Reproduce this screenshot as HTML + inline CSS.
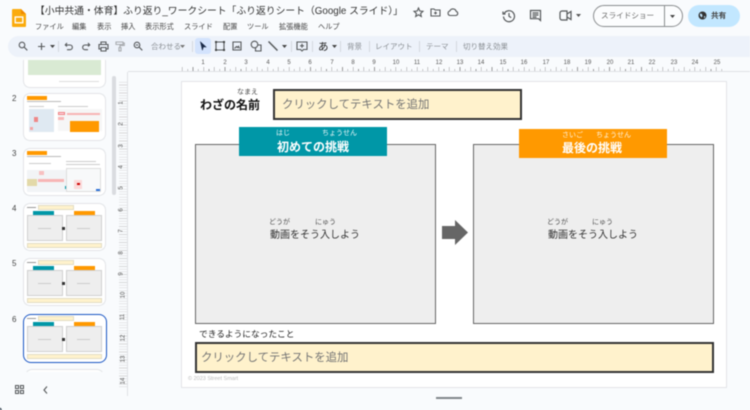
<!DOCTYPE html>
<html lang="ja"><head><meta charset="utf-8"><title>Slides</title>
<style>
html,body{margin:0;padding:0;width:750px;height:410px;overflow:hidden;background:#f9fbfd}
#r{position:relative;width:750px;height:410px;overflow:hidden;background:#f9fbfd;filter:blur(.4px);font-family:"Liberation Sans","Noto Sans CJK JP",sans-serif;color:#222}
#r div,#r span,#r svg{position:absolute}
.t{white-space:nowrap;line-height:1}
.m{top:23px;font-size:7.2px;color:#444;white-space:nowrap;line-height:1.2}
.tb{top:42px;font-size:7.5px;color:#8a8f94;white-space:nowrap;line-height:1.3}
.sep{top:41px;width:1px;height:11px;background:#d3d8df}
svg.i{fill:none;stroke:#55585a;stroke-width:1.1}
.hn{top:60px;font-size:6px;color:#555;line-height:1;font-family:"Liberation Sans",sans-serif;transform:translateX(-50%)}
.vn{left:120px;font-size:6px;color:#555;line-height:1;transform:translateY(-50%) rotate(-90deg);font-family:"Liberation Sans",sans-serif}
.num{left:12px;font-size:8px;color:#444;line-height:1}
.th{left:23px;width:81px;height:46px;background:#fff;border:1px solid #e3e5e8;border-radius:7px;overflow:hidden}
.th div{position:absolute}
.gb{background:#eee;border:.5px solid #d0d0d0;box-sizing:border-box;top:11px;height:26px;width:36px}
.by{background:#fff2cc;border:.5px solid #e2dcc4;box-sizing:border-box}
.ln{background:#ccc;height:1px}
.b{background:#eee;border:1.5px solid #666;box-sizing:border-box;top:144px;height:180px;width:241px}
.ph{background:#fff2cc;border:2px solid #333;box-sizing:border-box}
.pt{font-size:11.4px;color:#757575;line-height:1;white-space:nowrap}
.ru{font-size:7px;line-height:1;white-space:nowrap}
</style></head><body><div id="r">

<!-- logo -->
<svg style="left:11px;top:8px" width="16" height="20" viewBox="0 0 16 20"><path d="M2 1h8l5 5v12a1 1 0 0 1-1 1H2a1 1 0 0 1-1-1V2a1 1 0 0 1 1-1z" fill="#fbab0c"/><path d="M10 1l5 5h-5z" fill="#f08a00"/><rect x="4.2" y="9" width="7.6" height="5.8" fill="none" stroke="#fff" stroke-width="1.3"/></svg>
<div class="t" style="left:35px;top:6px;font-size:9.8px;color:#333;line-height:12px">【小中共通・体育】ふり返り_ワークシート「ふり返りシート（Google スライド）」</div>
<span class="m" style="left:35px">ファイル</span><span class="m" style="left:72px">編集</span><span class="m" style="left:97px">表示</span><span class="m" style="left:121px">挿入</span><span class="m" style="left:145px">表示形式</span><span class="m" style="left:184px">スライド</span><span class="m" style="left:223px">配置</span><span class="m" style="left:247px">ツール</span><span class="m" style="left:279px">拡張機能</span><span class="m" style="left:318px">ヘルプ</span>

<!-- title icons -->
<svg class="i" style="left:413px;top:7px" width="11" height="11" viewBox="0 0 11 11"><path d="M5.5 1l1.3 3 3.2.3-2.4 2.1.7 3.1-2.8-1.7-2.8 1.7.7-3.1L1 4.3l3.2-.3z"/></svg>
<svg class="i" style="left:430px;top:7px" width="11" height="10" viewBox="0 0 11 10"><path d="M1 2h3l1 1h5v6H1zM5.5 4.500v3M4 6h3"/></svg>
<svg class="i" style="left:447px;top:7px" width="12" height="10" viewBox="0 0 12 10"><path d="M3 8.500a2.300 2.300 0 0 1-.2-4.500 3.400 3.400 0 0 1 6.400.4 2.100 2.100 0 0 1-.3 4.100z"/></svg>

<!-- right header -->
<svg class="i" style="left:502px;top:9px;stroke-width:1.2" width="14" height="14" viewBox="0 0 14 14"><path d="M2.200 4.500a5.500 5.500 0 1 1-.7 3M1 2.500v2.500h2.500M7 4v3.300l2.200 1.300"/></svg>
<svg class="i" style="left:529px;top:9px;stroke-width:1.2" width="13" height="13" viewBox="0 0 13 13"><path d="M1.500 1.500h10v10l-2-1.800h-8zM3.500 4h6M3.500 6h6M3.500 8h4"/></svg>
<svg class="i" style="left:559px;top:10px;stroke-width:1.2" width="13" height="11" viewBox="0 0 13 11"><path d="M1 3a2 2 0 0 1 2-2h5v9H3a2 2 0 0 1-2-2zM8 4l4-2.500v8L8 7"/></svg>
<svg style="left:576px;top:14px" width="6" height="4"><path d="M0 0h5L2.500 3z" fill="#555"/></svg>
<div style="left:593px;top:5px;width:90px;height:22px;border:1px solid #8a8d8f;border-radius:12px;box-sizing:border-box;background:#fcfdfe"></div>
<div style="left:664px;top:5px;width:1px;height:22px;background:#8a8d8f"></div>
<span class="t" style="left:601px;top:12px;font-size:7.600px;color:#666">スライドショー</span>
<svg style="left:670px;top:15px" width="6" height="4"><path d="M0 0h5L2.500 3z" fill="#444"/></svg>
<div style="left:688px;top:5px;width:52px;height:22px;border-radius:11px;background:#c2e7ff"></div>
<svg style="left:698px;top:11px" width="9" height="9" viewBox="0 0 9 9"><circle cx="4.500" cy="4.500" r="4" fill="#333"/><path d="M2 2.500l2 .5 .5 2-1 1.500-1.500-2zM6 5l1.500.5-1.500 2z" fill="#c2e7ff"/></svg>
<span class="t" style="left:711px;top:12px;font-size:7.600px;color:#444;font-weight:bold">共有</span>

<!-- toolbar -->
<div style="left:8px;top:36px;width:760px;height:21px;border-radius:11px;background:#edf2fa"></div>
<svg class="i" style="left:18px;top:41px" width="10" height="10" viewBox="0 0 10 10"><circle cx="4" cy="4" r="2.800"/><path d="M6 6l3.300 3.300"/></svg>
<svg class="i" style="left:37px;top:42px" width="9" height="9" viewBox="0 0 9 9"><path d="M4.500 1v7M1 4.500h7"/></svg>
<svg style="left:50px;top:45px" width="6" height="4"><path d="M0 0h5L2.500 3z" fill="#444"/></svg>
<div class="sep" style="left:58px"></div>
<svg class="i" style="left:64px;top:42px" width="10" height="9" viewBox="0 0 10 9"><path d="M3 1L1.300 3 3 4.500M1.500 3H6a2.300 2.300 0 0 1 0 4.700H3"/></svg>
<svg class="i" style="left:81px;top:42px" width="10" height="9" viewBox="0 0 10 9"><path d="M7 1l1.700 2L7 4.500M8.500 3H4a2.300 2.300 0 0 0 0 4.700h3"/></svg>
<svg class="i" style="left:98px;top:41px" width="11" height="11" viewBox="0 0 11 11"><path d="M3 3.500V1h5v2.500M2.500 8H1V3.500h9V8H8.500M3 6.500h5V10H3z"/></svg>
<svg class="i" style="left:115px;top:41px;stroke:#a8abaf" width="10" height="11" viewBox="0 0 10 11"><path d="M1 1h7v2.500H1zM8 2h1.300v2.500H5v2M4 6.500h2V10H4z"/></svg>
<svg class="i" style="left:133px;top:41px" width="10" height="10" viewBox="0 0 10 10"><circle cx="4" cy="4" r="2.800"/><path d="M6 6l3.300 3.300M2.800 4h2.400"/></svg>
<span class="tb" style="left:151px">合わせる</span>
<svg style="left:180px;top:45px" width="6" height="4"><path d="M0 0h5L2.500 3z" fill="#777"/></svg>
<div class="sep" style="left:192px"></div>
<div style="left:195px;top:38px;width:16px;height:16px;border-radius:3px;background:#d3e3fd"></div>
<svg style="left:199px;top:41px" width="9" height="11" viewBox="0 0 9 11"><path d="M1.500 1l5.500 5H4.300l-.9 3.200z" fill="#1a2a48" stroke="#1a2a48" stroke-width=".6"/></svg>
<svg class="i" style="left:214px;top:40px" width="12" height="12" viewBox="0 0 12 12"><path d="M2 2h8v8H2z"/><path d="M1 1h2v2H1zM9 1h2v2H9zM1 9h2v2H1zM9 9h2v2H9z" fill="#444746" stroke="none"/></svg>
<svg class="i" style="left:232px;top:41px" width="10" height="10" viewBox="0 0 10 10"><path d="M1 1h8v8H1zM2.500 7.500l2-2 1 1 1-1.200 1 2.200"/></svg>
<svg class="i" style="left:250px;top:40px" width="12" height="12" viewBox="0 0 12 12"><circle cx="4.500" cy="4.500" r="3.300"/><path d="M7.500 5H11v6H5.500V8"/></svg>
<svg class="i" style="left:268px;top:41px;stroke-width:1.500" width="10" height="10" viewBox="0 0 10 10"><path d="M.5.500L9.500 9.500"/></svg>
<svg style="left:282px;top:45px" width="6" height="4"><path d="M0 0h5L2.500 3z" fill="#444"/></svg>
<div class="sep" style="left:291px"></div>
<svg class="i" style="left:296px;top:41px" width="12" height="11" viewBox="0 0 12 11"><path d="M1 1h10v7.500H7.500L6 10 4.500 8.500H1zM6 2.800v4M4 4.800h4"/></svg>
<div class="sep" style="left:312px"></div>
<span class="t" style="left:318px;top:42px;font-size:10.500px;color:#222">あ</span>
<svg style="left:332px;top:45px" width="6" height="4"><path d="M0 0h5L2.500 3z" fill="#444"/></svg>
<div class="sep" style="left:340px"></div>
<span class="tb" style="left:347px">背景</span><div class="sep" style="left:369px"></div>
<span class="tb" style="left:375px">レイアウト</span><div class="sep" style="left:419px"></div>
<span class="tb" style="left:426px">テーマ</span><div class="sep" style="left:456px"></div>
<span class="tb" style="left:463px">切り替え効果</span>

<!-- thumbnails -->
<div style="left:0;top:60px;width:112px;height:312px;overflow:hidden">
  <div class="th" style="top:-20px;left:23px"><div style="left:4px;top:4px;width:73px;height:30px;background:#d9ead3"></div><div class="ln" style="left:35px;top:40px;width:40px;background:#ddd"></div></div>
  <div class="th" style="top:33px;left:23px">
    <div style="left:3px;top:2px;width:20px;height:4px;background:#ff9900"></div><div class="ln" style="left:3px;top:7px;width:34px;background:#bbb"></div>
    <div class="ln" style="left:5px;top:12px;width:15px;background:#ccc"></div><div class="ln" style="left:34px;top:12px;width:30px;background:#ccc"></div>
    <div style="left:5px;top:15px;width:25px;height:23px;background:#dfe9f2"></div>
    <div style="left:10px;top:23px;width:4px;height:5px;background:#e88"></div><div style="left:6px;top:33px;width:3px;height:3px;background:#f3a6a6"></div>
    <div style="left:34px;top:15px;width:44px;height:22px;background:#f6f6f6"></div>
    <div style="left:34px;top:18px;width:7px;height:3px;border:.5px solid #f08080;box-sizing:border-box;background:#fde"></div>
    <div style="left:43px;top:19px;width:33px;height:2px;background:#f7b5b5"></div>
    <div style="left:34px;top:23px;width:6px;height:3px;background:#f8b8b8"></div>
    <div style="left:46px;top:27px;width:29px;height:11px;background:#ff9900"></div>
  </div>
  <div class="th" style="top:88px;left:23px">
    <div style="left:3px;top:2px;width:20px;height:4px;background:#ff9900"></div><div class="ln" style="left:3px;top:7px;width:34px;background:#bbb"></div>
    <div class="ln" style="left:5px;top:14px;width:22px;background:#ccc"></div><div class="ln" style="left:42px;top:12px;width:30px;background:#ccc"></div><div class="ln" style="left:42px;top:15px;width:34px;background:#ccc"></div>
    <div style="left:3px;top:21px;width:40px;height:22px;background:#f2f4f6"></div>
    <div style="left:3px;top:30px;width:10px;height:7px;background:#e3d9a8"></div>
    <div style="left:14px;top:30px;width:26px;height:3px;background:#f7b5b5"></div>
    <div style="left:15px;top:22px;width:5px;height:4px;background:#f8c0c0"></div>
    <div style="left:41px;top:37px;width:3px;height:3px;background:#0097a7"></div>
    <div style="left:42px;top:19px;width:35px;height:24px;background:#f8f9fa;border:.5px solid #ddd;box-sizing:border-box"></div>
    <div style="left:50px;top:31px;width:8px;height:9px;background:#fbdada"></div><div style="left:53px;top:34px;width:3px;height:2px;background:#c00"></div>
    <div style="left:72px;top:40px;width:4px;height:2px;background:#2a6fd6"></div>
  </div>
  <div class="th" style="top:143px;left:23px"><div class="ln" style="left:3px;top:3px;width:9px;background:#999"></div><div class="by" style="left:14px;top:1px;width:36px;height:5px"></div><div style="left:9px;top:7px;width:21px;height:4px;background:#0097a7"></div><div style="left:50px;top:7px;width:21px;height:4px;background:#ff9900"></div><div class="gb" style="left:3px"></div><div class="gb" style="left:42px"></div><div class="ln" style="left:14px;top:24px;width:13px"></div><div class="ln" style="left:53px;top:24px;width:13px"></div><div style="left:38px;top:23px;width:3px;height:3px;background:#333"></div><div class="by" style="left:3px;top:39px;width:75px;height:5px"></div></div>
  <div class="th" style="top:198px;left:23px"><div class="ln" style="left:3px;top:3px;width:9px;background:#999"></div><div class="by" style="left:14px;top:1px;width:36px;height:5px"></div><div style="left:9px;top:7px;width:21px;height:4px;background:#0097a7"></div><div style="left:50px;top:7px;width:21px;height:4px;background:#ff9900"></div><div class="gb" style="left:3px"></div><div class="gb" style="left:42px"></div><div class="ln" style="left:14px;top:24px;width:13px"></div><div class="ln" style="left:53px;top:24px;width:13px"></div><div style="left:38px;top:23px;width:3px;height:3px;background:#333"></div><div class="by" style="left:3px;top:39px;width:75px;height:5px"></div></div>
  <div class="th" style="top:254px;left:23px;border:1.500px solid #1a56c4;border-radius:8px;width:82px;height:47px"><div class="ln" style="left:3px;top:3px;width:9px;background:#999"></div><div class="by" style="left:14px;top:1px;width:36px;height:5px"></div><div style="left:9px;top:7px;width:21px;height:4px;background:#0097a7"></div><div style="left:50px;top:7px;width:21px;height:4px;background:#ff9900"></div><div class="gb" style="left:3px"></div><div class="gb" style="left:42px"></div><div class="ln" style="left:14px;top:24px;width:13px"></div><div class="ln" style="left:53px;top:24px;width:13px"></div><div style="left:38px;top:23px;width:3px;height:3px;background:#333"></div><div class="by" style="left:3px;top:39px;width:75px;height:5px"></div></div>
  <div class="th" style="top:309px;left:25px;width:77px"></div>
</div>
<span class="num" style="top:95px">2</span><span class="num" style="top:150px">3</span><span class="num" style="top:205px">4</span><span class="num" style="top:260px">5</span><span class="num" style="top:316px">6</span>
<div style="left:112px;top:76px;width:4px;height:119px;border-radius:2px;background:#dadce0"></div>
<svg class="i" style="left:15px;top:385px" width="9" height="9" viewBox="0 0 9 9"><path d="M.5.500h3v3h-3zM5.500.500h3v3h-3zM.5 5.500h3v3h-3zM5.500 5.500h3v3h-3z"/></svg>
<svg class="i" style="left:43px;top:386px" width="5" height="8" viewBox="0 0 5 8"><path d="M4 .5L1 4l3 3.500"/></svg>
<div style="left:-6px;top:407px;width:8px;height:8px;border-radius:4px;background:#1c2b3a"></div>

<!-- rulers -->
<div style="left:182px;top:69px;width:544px;height:2px;background:repeating-linear-gradient(90deg,#999 0,#999 .6px,transparent .6px,transparent 5.340px)"></div>
<div style="left:182px;top:67px;width:544px;height:2px;background:repeating-linear-gradient(90deg,#999 0,#999 .6px,transparent .6px,transparent 10.680px)"></div>
<div style="left:128px;top:71px;width:622px;height:1px;background:#dfe1e5"></div>
<div style="left:119px;top:82px;width:8px;height:305px;background:repeating-linear-gradient(180deg,#bbb 0,#bbb .6px,transparent .6px,transparent 2.670px);opacity:.55"></div>
<div style="left:127px;top:72px;width:1px;height:324px;background:#dfe1e5"></div>
<span class="hn" style="left:203px">1</span><span class="hn" style="left:225px">2</span><span class="hn" style="left:246px">3</span><span class="hn" style="left:268px">4</span><span class="hn" style="left:289px">5</span><span class="hn" style="left:310px">6</span><span class="hn" style="left:332px">7</span><span class="hn" style="left:353px">8</span><span class="hn" style="left:374px">9</span><span class="hn" style="left:396px">10</span><span class="hn" style="left:417px">11</span><span class="hn" style="left:439px">12</span><span class="hn" style="left:460px">13</span><span class="hn" style="left:481px">14</span><span class="hn" style="left:503px">15</span><span class="hn" style="left:524px">16</span><span class="hn" style="left:546px">17</span><span class="hn" style="left:567px">18</span><span class="hn" style="left:588px">19</span><span class="hn" style="left:610px">20</span><span class="hn" style="left:631px">21</span><span class="hn" style="left:652px">22</span><span class="hn" style="left:674px">23</span><span class="hn" style="left:695px">24</span><span class="hn" style="left:717px">25</span>
<span class="vn" style="top:103px">1</span><span class="vn" style="top:124px">2</span><span class="vn" style="top:146px">3</span><span class="vn" style="top:167px">4</span><span class="vn" style="top:188px">5</span><span class="vn" style="top:210px">6</span><span class="vn" style="top:231px">7</span><span class="vn" style="top:253px">8</span><span class="vn" style="top:274px">9</span><span class="vn" style="top:295px">10</span><span class="vn" style="top:317px">11</span><span class="vn" style="top:338px">12</span><span class="vn" style="top:359px">13</span><span class="vn" style="top:381px">14</span>

<!-- slide -->
<div style="left:182px;top:82px;width:544px;height:305px;background:#fff;box-shadow:0 0 0 1px #e3e5e8"></div>
<span class="t" style="left:200px;top:99px;font-size:12px;font-weight:bold;color:#111">わざの名前</span>
<span class="ru" style="left:237px;top:89px;color:#444">なまえ</span>
<div class="ph" style="left:273px;top:89px;width:249px;height:31px"></div>
<span class="pt" style="left:282px;top:100px">クリックしてテキストを追加</span>

<div class="b" style="left:195px"></div>
<div class="b" style="left:473px"></div>
<div style="left:239px;top:127px;width:148px;height:29px;background:#0097a7"></div>
<div style="left:519px;top:129px;width:148px;height:29px;background:#ff9900"></div>
<span class="ru" style="left:276px;top:130px;color:#e6f5f7">はじ</span><span class="ru" style="left:322px;top:130px;color:#e6f5f7">ちょうせん</span>
<span class="t" style="left:277px;top:141px;font-size:12px;font-weight:bold;color:#fff">初めての挑戦</span>
<span class="ru" style="left:562px;top:132px;color:#fff3dd">さいご</span><span class="ru" style="left:596px;top:132px;color:#fff3dd">ちょうせん</span>
<span class="t" style="left:562px;top:142px;font-size:12px;font-weight:bold;color:#fff">最後の挑戦</span>

<span class="ru" style="left:269px;top:219px;color:#555">どうが</span><span class="ru" style="left:315px;top:219px;color:#555">にゅう</span>
<span class="t" style="left:270px;top:231px;font-size:10px;color:#333">動画をそう入しよう</span>
<span class="ru" style="left:547px;top:219px;color:#555">どうが</span><span class="ru" style="left:592px;top:219px;color:#555">にゅう</span>
<span class="t" style="left:548px;top:231px;font-size:10px;color:#333">動画をそう入しよう</span>
<svg style="left:442px;top:220px" width="26" height="25" viewBox="0 0 26 25"><path d="M0 6h13V0l13 12.500L13 25v-6H0z" fill="#666"/></svg>

<span class="t" style="left:199px;top:330px;font-size:8.700px;color:#222">できるようになったこと</span>
<div class="ph" style="left:195px;top:342px;width:519px;height:31px"></div>
<span class="pt" style="left:201px;top:353px">クリックしてテキストを追加</span>
<span class="t" style="left:188px;top:377px;font-size:5.500px;color:#bbb">© 2023 Street Smart</span>

<div style="left:436px;top:397px;width:26px;height:1.500px;background:#80868b"></div>
</div></body></html>
